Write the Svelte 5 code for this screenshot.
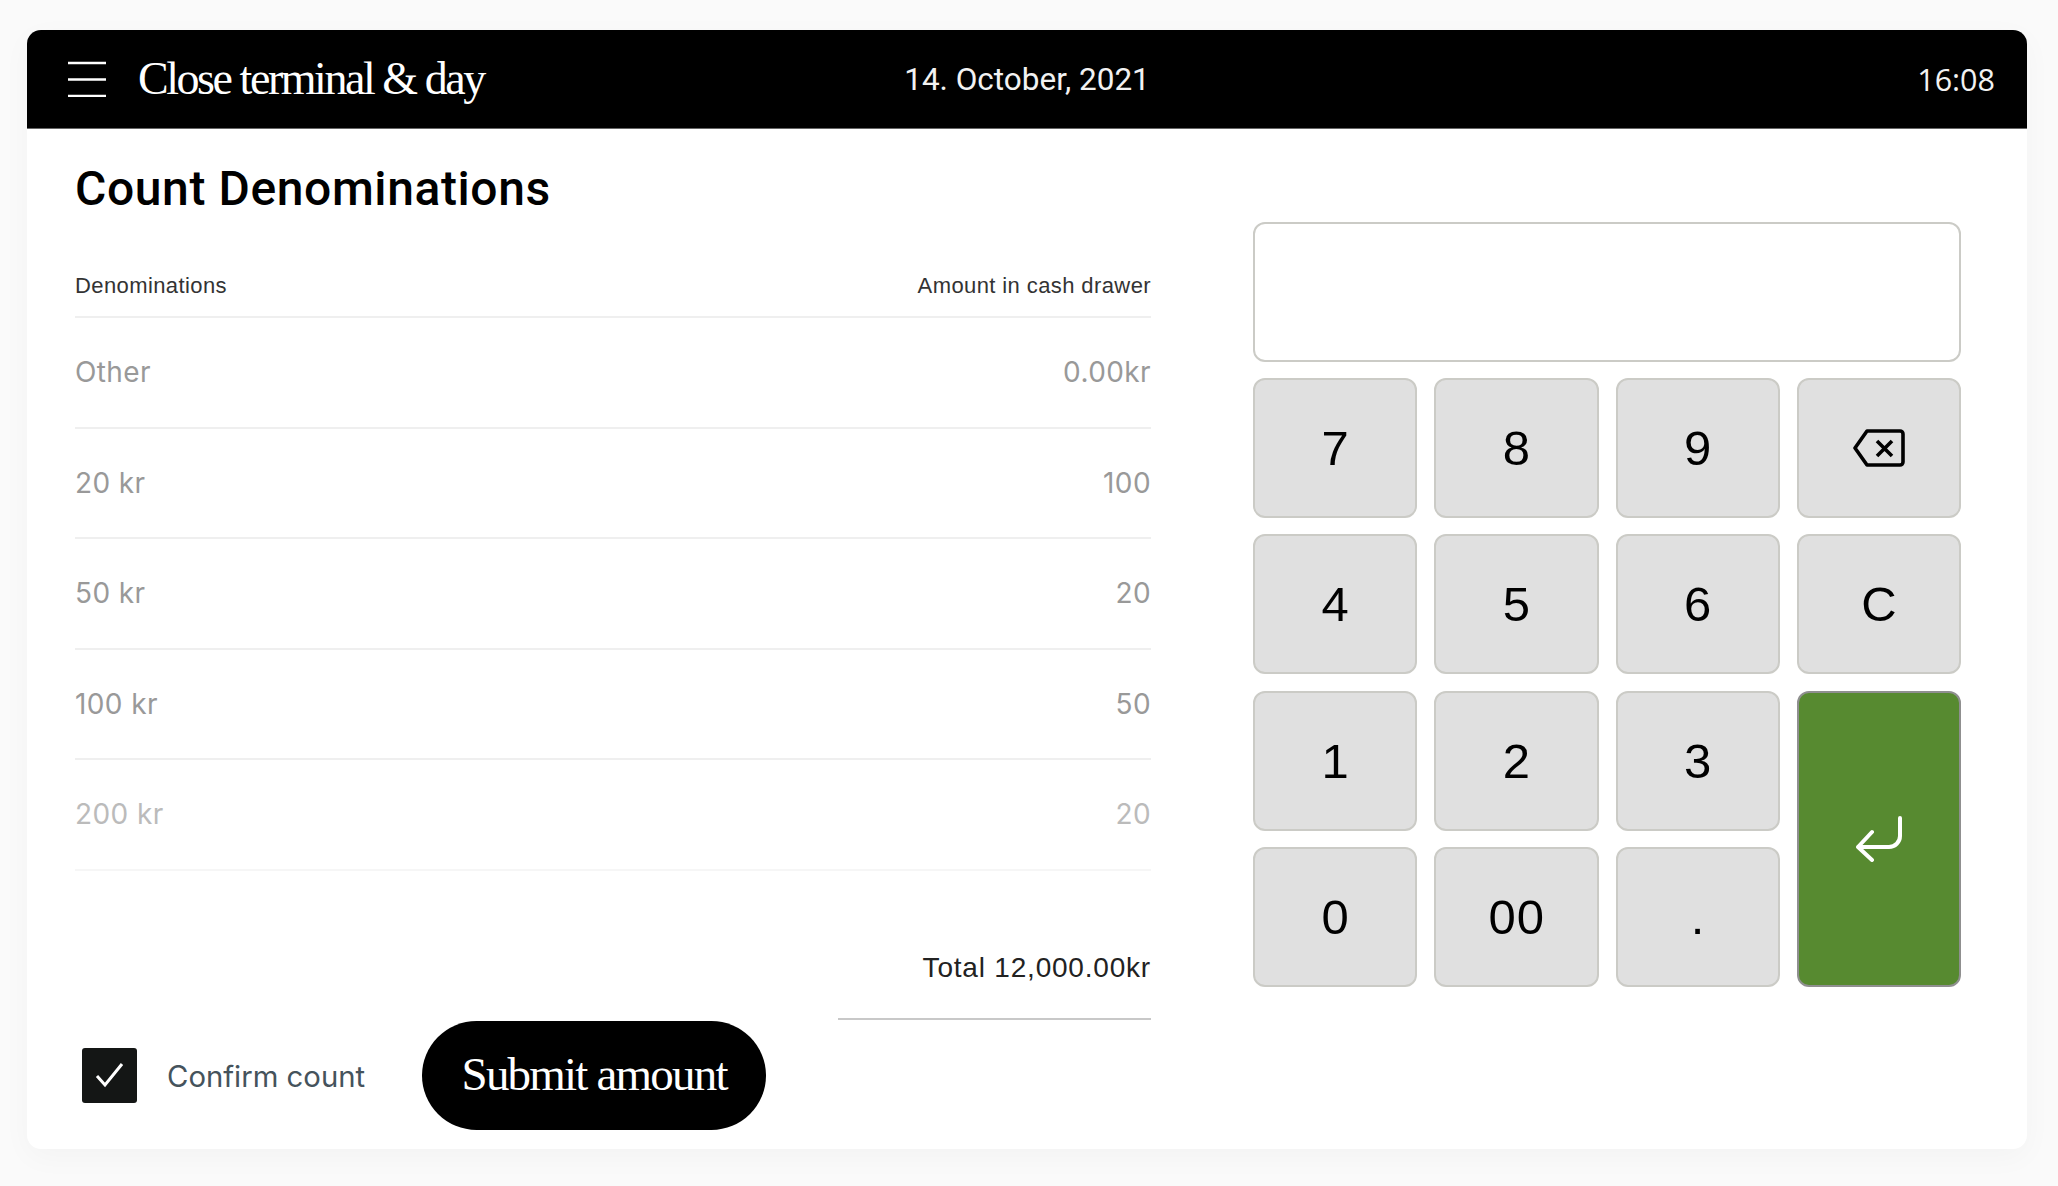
<script>
  const rows = [
    { label: 'Other', value: '0.00kr' },
    { label: '20 kr', value: '100' },
    { label: '50 kr', value: '20' },
    { label: '100 kr', value: '50' },
    { label: '200 kr', value: '20', faded: true }
  ];

  const keys = ['7', '8', '9', 'back', '4', '5', '6', 'C', '1', '2', '3', 'enter', '0', '00', '.'];
</script>

<div class="page">
  <div class="card">
    <header class="topbar">
      <div class="topbar-left">
        <svg class="burger" width="38" height="36" viewBox="0 0 38 36" aria-hidden="true">
          <path d="M0 2h38M0 18.500h38M0 35h38" stroke="#fff" stroke-width="2.500" fill="none" />
        </svg>
        <span class="page-title">Close terminal &amp; day</span>
      </div>
      <span class="date">14. October, 2021</span>
      <span class="time">16:08</span>
    </header>

    <main class="content">
      <section class="count">
        <h1>Count Denominations</h1>

        <div class="table-head">
          <span>Denominations</span>
          <span>Amount in cash drawer</span>
        </div>

        {#each rows as row}
          <div class="row" class:faded={row.faded}>
            <span>{row.label}</span>
            <span>{row.value}</span>
          </div>
        {/each}

        <div class="total"><span>Total 12,000.00kr</span></div>

        <div class="actions">
          <label class="confirm">
            <span class="checkbox">
              <svg width="30" height="26" viewBox="0 0 30 26" aria-hidden="true">
                <path d="M2 14l8 9L27 2" stroke="#fff" stroke-width="3" fill="none" />
              </svg>
            </span>
            <span class="confirm-label">Confirm count</span>
          </label>
          <button class="submit">Submit amount</button>
        </div>
      </section>

      <section class="pad">
        <div class="display"></div>
        <div class="keys">
          {#each keys as key}
            {#if key === 'back'}
              <button class="key" aria-label="Backspace">
                <svg width="52" height="38" viewBox="0 0 52 38" aria-hidden="true">
                  <path d="M14 2h33a3 3 0 0 1 3 3v28a3 3 0 0 1-3 3H14L2 19z" fill="none" stroke="#000" stroke-width="3.600" stroke-linejoin="round" />
                  <path d="M24 12l15 15M39 12L24 27" fill="none" stroke="#000" stroke-width="3.600" />
                </svg>
              </button>
            {:else if key === 'enter'}
              <button class="key enter" aria-label="Enter">
                <svg width="48" height="46" viewBox="0 0 48 46" aria-hidden="true">
                  <path d="M45 2v18a11 11 0 0 1-11 11H3M17 16L3 31l14 13" fill="none" stroke="#fff" stroke-width="4" stroke-linecap="round" stroke-linejoin="round" />
                </svg>
              </button>
            {:else}
              <button class="key">{key}</button>
            {/if}
          {/each}
        </div>
      </section>
    </main>
  </div>
</div>

<style>
  :global(body) {
    background: #fafafa;
  }

  .page {
    padding: 30px 31px 37px 27px;
    font-family: "Liberation Sans", sans-serif;
  }

  .card {
    height: 1119px;
    background: #fff;
    border-radius: 14px;
    box-shadow: 0 8px 30px rgba(0, 0, 0, 0.03);
    overflow: hidden;
  }

  .topbar {
    height: 98px;
    background: #000;
    border-bottom: 1px solid #666;
    color: #fff;
    display: grid;
    grid-template-columns: 1fr auto 1fr;
    align-items: center;
    padding: 0 32px;
  }

  .topbar-left {
    display: flex;
    align-items: center;
    gap: 32px;
    margin-left: 9px;
  }

  .page-title {
    font-family: "Liberation Serif", serif;
    font-size: 46px;
    letter-spacing: -2.450px;
    padding-bottom: 2px;
  }

  .date,
  .time {
    font-family: Roboto, sans-serif;
    font-size: 31.500px;
    color: #f2f2f2;
  }

  .time {
    justify-self: end;
    font-family: "Open Sans", sans-serif;
    font-size: 30.500px;
  }

  .content {
    display: flex;
    gap: 102px;
    padding: 0 65px 0 48px;
  }

  .count {
    width: 1076px;
  }

  h1 {
    margin: 0;
    padding-top: 35px;
    font-family: Roboto, sans-serif;
    font-size: 48px;
    line-height: 50px;
    font-weight: 500;
    letter-spacing: 0.600px;
    color: #000;
  }

  .table-head {
    display: flex;
    justify-content: space-between;
    align-items: center;
    height: 104px;
    padding-top: 42px;
    box-sizing: border-box;
    border-bottom: 2px solid #efefef;
    font-size: 22px;
    letter-spacing: 0.400px;
    color: #333;
  }

  .row {
    display: flex;
    justify-content: space-between;
    align-items: center;
    height: 110.500px;
    box-sizing: border-box;
    border-bottom: 2px solid #efefef;
    font-family: Inter, sans-serif;
    font-size: 28px;
    letter-spacing: 0.400px;
    color: #999;
  }

  .row.faded {
    color: #bbb;
    border-bottom-color: #f6f6f6;
  }

  .total {
    display: flex;
    justify-content: flex-end;
    margin-top: 68px;
    font-size: 28px;
    letter-spacing: 0.800px;
    color: #222;
  }

  .total span {
    width: 313px;
    height: 81px;
    padding-top: 13px;
    text-align: right;
    border-bottom: 2px solid #c8c8c8;
    box-sizing: border-box;
  }

  .actions {
    display: flex;
    align-items: center;
    margin-top: 1px;
  }

  .confirm {
    display: flex;
    align-items: center;
    gap: 30px;
    margin-left: 7px;
    margin-right: 57px;
  }

  .checkbox {
    width: 55px;
    height: 55px;
    background: #141615;
    border-radius: 3px;
    display: flex;
    align-items: center;
    justify-content: center;
  }

  .confirm-label {
    font-family: Inter, sans-serif;
    font-size: 29.300px;
    color: #45535c;
    padding-top: 2px;
  }

  .submit {
    width: 344px;
    height: 109px;
    border: none;
    border-radius: 55px;
    background: #000;
    color: #fff;
    font-family: "Liberation Serif", serif;
    font-size: 47px;
    letter-spacing: -1.800px;
    padding: 0 0 3px;
  }

  .pad {
    width: 708px;
    padding-top: 93px;
  }

  .display {
    height: 140px;
    box-sizing: border-box;
    border: 2px solid #cbcbc6;
    border-radius: 12px;
    margin-bottom: 16px;
  }

  .keys {
    display: grid;
    grid-template-columns: repeat(4, 1fr);
    grid-auto-rows: 140px;
    gap: 16.300px 17px;
  }

  .key {
    background: #e0e0e0;
    border: 2px solid #cbcbc6;
    border-radius: 12px;
    font-family: "Liberation Sans", sans-serif;
    font-size: 49px;
    letter-spacing: 1px;
    color: #000;
    display: flex;
    align-items: center;
    justify-content: center;
    padding: 0 0 0 1px;
  }

  .enter {
    grid-column: 4;
    grid-row: 3 / span 2;
    background: #578a30;
    border-color: #8f8f8f;
  }
</style>
